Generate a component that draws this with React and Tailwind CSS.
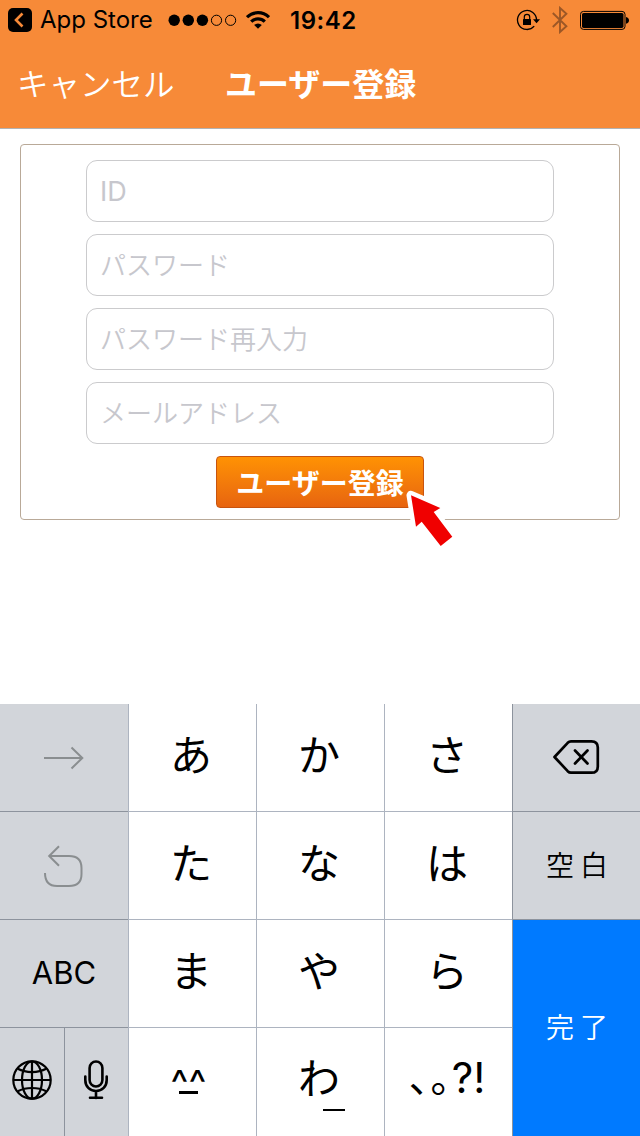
const FIELDS = [
  { id: 'user', type: 'text', label: 'ID', font: "pt-px text-[27px] font-['Inter',sans-serif]" },
  { id: 'password', type: 'text', label: 'パスワード', font: 'pb-[3px] text-[26px] font-[350]' },
  { id: 'confirm', type: 'text', label: 'パスワード再入力', font: 'pb-[3px] text-[26px] font-[350]' },
  { id: 'email', type: 'text', label: 'メールアドレス', font: 'pb-[3px] text-[26px] font-[350]' },
];

const KANA_ROWS = [
  ['あ', 'か', 'さ'],
  ['た', 'な', 'は'],
  ['ま', 'や', 'ら'],
];

const SIDE_KEY = 'flex items-center justify-center h-27 bg-[#d2d5da] border-[#8d939d]';
const KANA_KEY = 'flex items-center justify-center h-27 bg-white border-l border-b border-[#adb4c0]';

function StatusBar() {
  return (
    <div className="flex items-center h-10 pl-2 pr-[11px] text-2xl leading-10 font-['Inter',sans-serif] text-black">
      <svg className="w-6 h-6 shrink-0" viewBox="0 0 24 24">
        <rect width="24" height="24" rx="5" />
        <path d="M14.5 5.5 8 12l6.5 6.5" fill="none" stroke="#f78a38" strokeWidth="2.6" />
      </svg>
      <span className="ml-2 w-[113px] whitespace-nowrap">App Store</span>

      {/* signal */}
      <svg className="ml-[15px] w-[69px] h-3 shrink-0" viewBox="0 0 69 12">
        {[0, 1, 2, 3, 4].map(i => (
          <circle key={i} cx={6.2 + i * 14.1} cy="6.3" r={i < 3 ? 5.7 : 5.1}
            fill={i < 3 ? '#000' : 'none'} stroke="#000" strokeWidth={i < 3 ? 0 : 1} />
        ))}
      </svg>
      <svg className="ml-[9px] w-6 h-[18px] shrink-0" viewBox="0 0 24 18" fill="none" stroke="#000" strokeWidth="3.2">
        <path d="M1 6.2a15.6 15.6 0 0 1 22 0" />
        <path d="M5.2 10.6a9.7 9.7 0 0 1 13.6 0" />
        <path d="M12 17.8 8.2 14a5.4 5.4 0 0 1 7.6 0z" fill="#000" stroke="none" />
      </svg>
      <span className="ml-5 font-semibold whitespace-nowrap tracking-[0.5px] pt-px">19:42</span>

      {/* rotation lock */}
      <svg className="ml-auto w-6 h-[22px] shrink-0" viewBox="0 0 24 22">
        <path d="M18.2 17.2a9.5 9.5 0 1 1 2.3-6" fill="none" stroke="#000" strokeWidth="1.3" />
        <path d="M17 10.3h7l-3.5 3.9z" />
        <rect x="7" y="10" width="8" height="6" rx=".6" />
        <path d="M8.3 10.5V8a2.7 2.7 0 0 1 5.4 0v2.5" fill="none" stroke="#000" strokeWidth="1.2" />
      </svg>
      <svg className="ml-3 w-4 h-7 shrink-0" viewBox="0 0 16 28">
        <path d="M.8 7 14.4 20.2 8 26V2l6.4 5.8L.8 21" fill="none" stroke="#9c5726" strokeWidth="1.9" />
      </svg>
      <svg className="ml-3 w-[49px] h-5 shrink-0" viewBox="0 0 49 20">
        <rect x=".5" y="1.4" width="44.5" height="18" rx="3" fill="none" stroke="#000" />
        <rect x="2" y="2.9" width="41.5" height="15" rx="1.6" />
        <path d="M46 7.1c4 .8 4 5.8 0 6.6z" />
      </svg>
    </div>
  );
}

function NavBar() {
  return (
    <div className="flex h-22 pl-[17px] text-[32px] leading-[84px] text-white whitespace-nowrap">
      <span className="w-[208px] text-[31.5px] leading-[85px] font-[350]">キャンセル</span>
      <h1 className="font-bold">ユーザー登録</h1>
    </div>
  );
}

function RegisterForm() {
  return (
    <form className="relative mx-5 mt-[15px] pt-[15px] pb-[11px] flex flex-col items-center gap-3 border border-[#b9a998] rounded">
      {FIELDS.map(f => (
        <input key={f.id} type={f.type} placeholder={f.label}
          className={`${f.font} w-[468px] h-[62px] px-[13px] border border-[#cbcbcd] rounded-[11px] placeholder:text-[#c7c7cd] placeholder:opacity-100`} />
      ))}
      <button type="button"
        className="w-[208px] h-[52px] text-[28px] leading-[50px] font-bold text-white whitespace-nowrap border border-[#c8540f] rounded bg-linear-to-b from-[#ff9203] to-[#e7640f]">
        ユーザー登録
      </button>

      {/* pointer over the button */}
      <svg className="absolute left-[382px] top-[342px] w-14 h-16" viewBox="0 0 56 64">
        <path d="m8 8.3 29.3 12.7-6.6 4 18.6 24.7-11.6 9.3-19-24.3-5.7 5z"
          fill="#f00000" stroke="#fff" strokeWidth="9" strokeLinejoin="round" paintOrder="stroke" />
      </svg>
    </form>
  );
}

function Keyboard() {
  return (
    <div className="grid grid-cols-[128px_384px_128px] h-108 text-black">

      {/* left column */}
      <div>
        <div className={`${SIDE_KEY} border-b`}>
          <svg className="w-10 h-6" viewBox="0 0 40 24" fill="none" stroke="#8a8e90" strokeWidth="2">
            <path d="M0 12h38.5M27.5 1.5 38.3 12 27.5 22.5" />
          </svg>
        </div>
        <div className={`${SIDE_KEY} border-b`}>
          <svg className="w-10 h-[42px]" viewBox="0 0 40 42" fill="none" stroke="#8a8e90" strokeWidth="2">
            <path d="M5.5 11H25c9 0 12.5 4 12.5 12v6c0 8-3.5 12-12.5 12H13C4.5 41 1 36.5 1 28" />
            <path d="M15 1.3 5.2 11l9.8 9.8" />
          </svg>
        </div>
        <div className={`${SIDE_KEY} border-b text-[31px] font-['Inter',sans-serif]`}>ABC</div>
        <div className="grid grid-cols-2">
          <div className={SIDE_KEY}>
            <svg className="w-10 h-10 mb-1" viewBox="0 0 40 40" fill="none" stroke="#000" strokeWidth="2.2">
              <circle cx="20" cy="20" r="18.7" />
              <path d="M20 1v38M1 20h38" />
              <ellipse cx="20" cy="20" rx="10" ry="18.7" />
              <path d="M5.8 8.8c8 4.3 20.4 4.3 28.4 0M5.8 31.2c8-4.3 20.4-4.3 28.4 0" />
            </svg>
          </div>
          <div className={`${SIDE_KEY} border-l pr-0.5`}>
            <svg className="w-6 h-10 mb-1" viewBox="0 0 24 40" fill="none" stroke="#000" strokeWidth="2.6">
              <rect x="5.6" y="1.5" width="12.8" height="25" rx="6.4" />
              <path d="M1.3 16.5V20c0 6.5 4.5 11 10.7 11S22.7 26.5 22.7 20v-3.5M12 31V38M6 37.7h12" strokeLinecap="round" />
            </svg>
          </div>
        </div>
      </div>

      {/* kana */}
      <div className="grid grid-cols-3 text-[42px]">
        {KANA_ROWS.flat().map(k => (
          <div key={k} className={`${KANA_KEY} pb-2.5 pr-[3px]`}>{k}</div>
        ))}
        <div className="flex flex-col items-center h-27 pt-[35px] pr-2 bg-white border-l border-[#adb4c0]">
          <span className="h-[28px] leading-10 text-[38px] font-['Inter',sans-serif]">^^</span>
          <span className="w-[19px] h-[3px] bg-black" />
        </div>
        <div className="flex flex-col items-center h-27 pt-[17px] bg-white border-l border-[#adb4c0]">
          <span className="h-16 pr-[3px] leading-[62px]">わ</span>
          <span className="ml-[26px] w-[22px] h-0.5 bg-black" />
        </div>
        <div className="flex items-center justify-center h-27 pb-[9px] pr-0.5 bg-white border-l border-[#adb4c0]">
          <span className="pb-1.5 tracking-[1px] text-[40px]">､｡</span>
          <span className="font-['Inter',sans-serif]">?!</span>
        </div>
      </div>

      {/* right column */}
      <div className="border-l border-[#8d939d]">
        <div className={`${SIDE_KEY} border-b pr-px pb-0.5`}>
          <svg className="w-12 h-9" viewBox="0 0 48 36" fill="none" stroke="#000" strokeWidth="2.7" strokeLinejoin="round" strokeLinecap="round">
            <path d="M19 2.3h20.5c4 0 6.3 2.3 6.3 6.3v18.8c0 4-2.3 6.3-6.3 6.3H19c-1.3 0-2.3-.5-3.3-1.5L2.5 18 15.7 3.8c1-1 2-1.5 3.3-1.5z" />
            <path d="m23 11.5 12.5 13M35.5 11.5 23 24.5" />
          </svg>
        </div>
        <div className={`${SIDE_KEY} border-b pl-[7px] pb-1 text-[28px] tracking-[6px] font-[350]`}>空白</div>
        <div className="flex items-center justify-center h-54 pl-[7px] pb-1 bg-[#007aff] text-[28px] tracking-[6px] font-[350] text-white">完了</div>
      </div>
    </div>
  );
}

export default function App() {
  return (
    <div lang="ja" className="flex flex-col w-[640px] h-[1136px] overflow-hidden bg-white font-['Noto_Sans_CJK_JP',sans-serif]">
      <header className="h-[129px] bg-[#f78a38] border-b border-[#b2b2b2]">
        <StatusBar />
        <NavBar />
      </header>
      <main className="flex-1">
        <RegisterForm />
      </main>
      <Keyboard />
    </div>
  );
}
